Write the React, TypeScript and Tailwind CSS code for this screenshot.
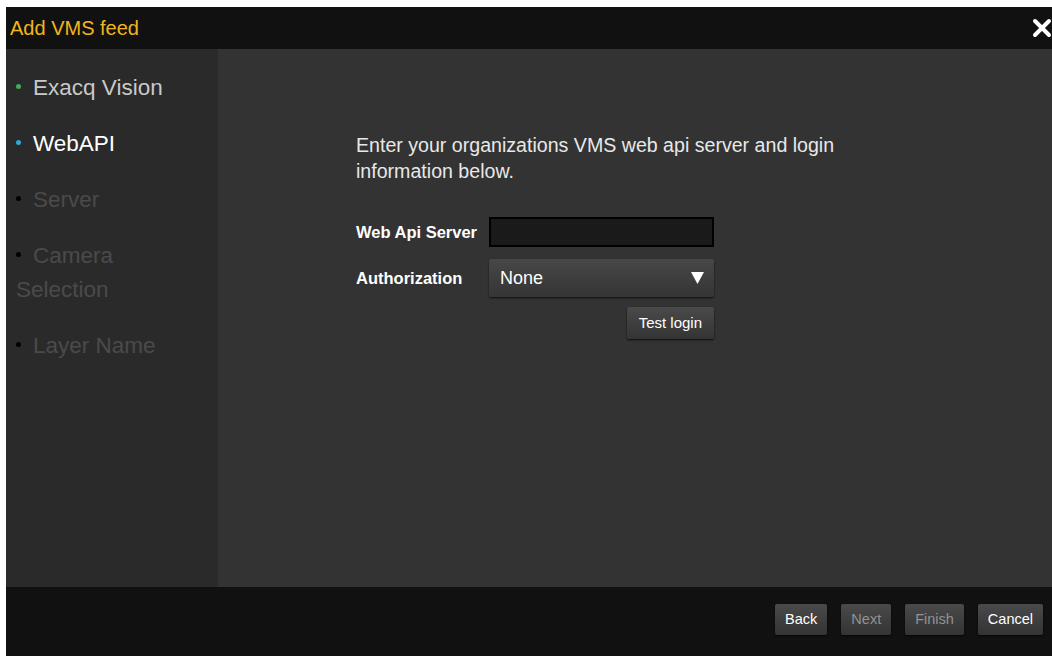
import { useState } from 'react';

type Step = {
  label: string;
  state: 'done' | 'active' | 'pending';
};

const steps: Step[] = [
  { label: 'Exacq Vision', state: 'done' },
  { label: 'WebAPI', state: 'active' },
  { label: 'Server', state: 'pending' },
  { label: 'Camera Selection', state: 'pending' },
  { label: 'Layer Name', state: 'pending' },
];

function StepItem({ step }: { step: Step }) {
  const dot =
    step.state === 'done'
      ? 'bg-[#3fae5a]'
      : step.state === 'active'
        ? 'bg-[#2ea8e0]'
        : 'bg-black';
  const text =
    step.state === 'done'
      ? 'text-[#c9c9c9]'
      : step.state === 'active'
        ? 'text-white'
        : 'text-[#4a4a4a]';
  return (
    <div className={`text-[22.5px] leading-[34px] pl-[10px] ${text}`}>
      <span className={`inline-block w-[5px] h-[5px] rounded-full align-middle mr-[12px] mb-[6px] ${dot}`} />
      {step.label}
    </div>
  );
}

function FooterButton({ label, disabled }: { label: string; disabled?: boolean }) {
  return (
    <button
      className={`h-[31px] px-[10px] rounded-[2px] text-[14.5px] bg-gradient-to-b from-[#4a4a4a] to-[#343434] shadow-[0_1px_2px_rgba(0,0,0,0.8)] ${
        disabled ? 'text-[#929292]' : 'text-white'
      }`}
    >
      {label}
    </button>
  );
}

export default function App() {
  const [server, setServer] = useState('');

  return (
    <div
      className="w-[1052px] h-[656px] bg-white pt-[7px] pl-[6px] flex flex-col overflow-hidden"
      style={{ fontFamily: '"Liberation Sans", Arial, sans-serif' }}
    >
      {/* title bar */}
      <div className="h-[42px] bg-[#111111] flex items-center justify-between pl-[4px] shrink-0">
        <span className="text-[#f2b51f] text-[20px]">Add VMS feed</span>
        <svg width="20" height="20" viewBox="0 0 20 20">
          <path d="M3 3 L17 17 M17 3 L3 17" stroke="white" strokeWidth="4" strokeLinecap="round" />
        </svg>
      </div>

      <div className="flex flex-1 min-h-0">
        {/* wizard steps */}
        <div className="w-[212px] bg-[#2a2a2a] flex flex-col gap-[22px] pt-[22px] pr-[40px]">
          {steps.map((s) => (
            <StepItem key={s.label} step={s} />
          ))}
        </div>

        {/* form panel */}
        <div className="flex-1 bg-[#333333] pl-[138px] pt-[83px]">
          <p className="text-[#e8e8e8] text-[19.6px] leading-[26px] w-[500px]">
            Enter your organizations VMS web api server and login information below.
          </p>

          <div className="mt-[33px] w-[358px] flex flex-col">
            <div className="flex items-center h-[30px]">
              <label className="w-[133px] text-white font-bold text-[16.5px]">Web Api Server</label>
              <input
                value={server}
                onChange={(e) => setServer(e.target.value)}
                className="w-[225px] h-[30px] bg-[#1a1a1a] border-[2px] border-black outline-none text-white text-[14px] px-2"
              />
            </div>
            <div className="flex items-center h-[38px] mt-[12px]">
              <label className="w-[133px] text-white font-bold text-[16.5px]">Authorization</label>
              <div className="w-[225px] h-[38px] rounded-[2px] bg-gradient-to-b from-[#474747] to-[#353535] shadow-[0_1px_2px_rgba(0,0,0,0.7)] flex items-center justify-between pl-[11px] pr-[10px]">
                <span className="text-white text-[18px]">None</span>
                <svg width="13" height="12" viewBox="0 0 13 12">
                  <path d="M0 0 H13 L6.5 12 Z" fill="white" />
                </svg>
              </div>
            </div>
            <div className="flex justify-end mt-[10px]">
              <button className="h-[32px] px-[12px] rounded-[2px] text-white text-[15px] bg-gradient-to-b from-[#4a4a4a] to-[#343434] shadow-[0_1px_2px_rgba(0,0,0,0.8)]">
                Test login
              </button>
            </div>
          </div>
        </div>
      </div>

      {/* wizard actions */}
      <div className="h-[69px] bg-[#111111] flex items-center justify-end gap-[14px] pr-[9px] pb-[4px] shrink-0">
        <FooterButton label="Back" />
        <FooterButton label="Next" disabled />
        <FooterButton label="Finish" disabled />
        <FooterButton label="Cancel" />
      </div>
    </div>
  );
}
